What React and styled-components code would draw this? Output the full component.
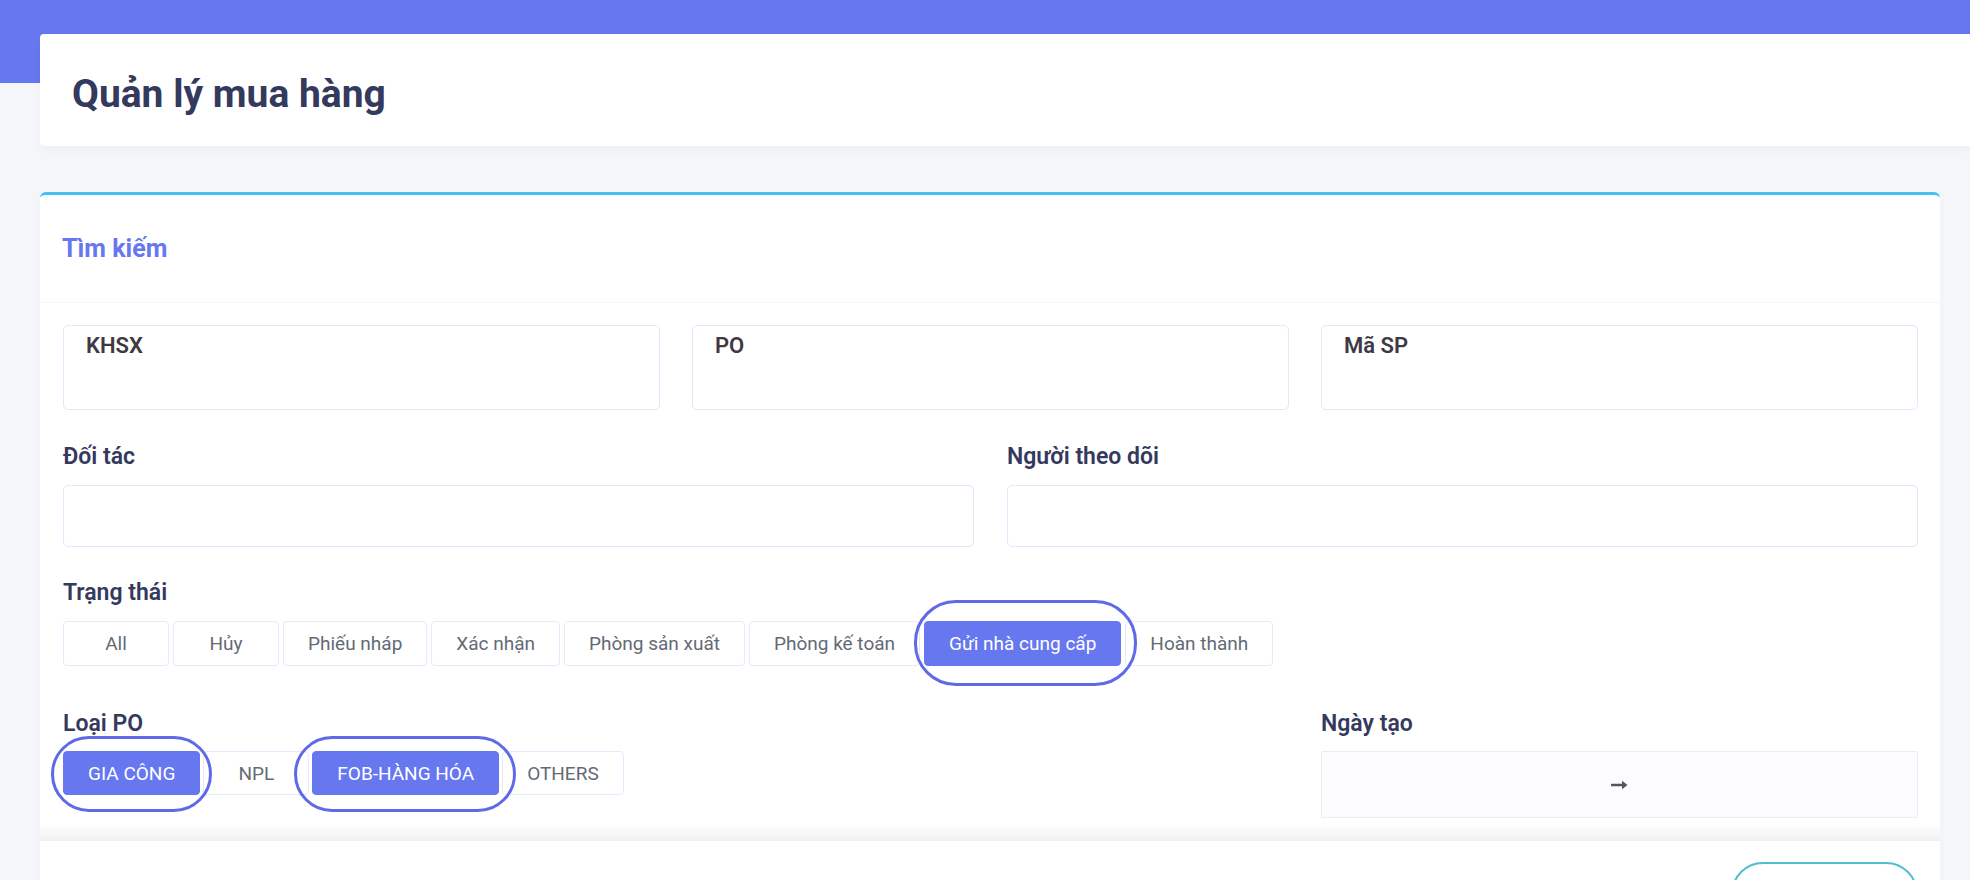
import styled, { createGlobalStyle } from 'styled-components'

const GlobalStyle = createGlobalStyle`
  html, body {
    margin: 0;
    overflow: hidden;
  }
  body {
    font-family: Roboto, "Noto Sans", Arial, sans-serif;
    color: #34395e;
  }
  * { box-sizing: border-box; }
`

const Page = styled.div`
  min-height: 100vh;
  background: linear-gradient(#6777ef 0, #6777ef 83px, #f4f6f9 83px);
  padding: 34px 30px 0 40px;
`

const SectionHeader = styled.div`
  height: 112px;
  margin-right: -30px;
  background: #fff;
  border-radius: 4px 0 0 4px;
  box-shadow: 0 4px 8px rgba(0, 0, 0, 0.03);
  display: flex;
  align-items: center;
  padding: 8px 0 0 32px;
`

const Title = styled.h1`
  margin: 0;
  font-size: 39px;
  font-weight: 700;
  color: #34395e;
`

const Card = styled.div`
  margin-top: 46px;
  background: #fff;
  border-top: 3px solid #45bff4;
  border-radius: 6px;
  box-shadow: 0 4px 8px rgba(0, 0, 0, 0.03);
`

const CardHeader = styled.div`
  height: 108px;
  display: flex;
  align-items: center;
  padding: 0 22px;
  border-bottom: 1px solid #f6f6f9;
`

const CardTitle = styled.h4`
  margin: 0;
  font-size: 25px;
  font-weight: 700;
  color: #6777ef;
`

const CardBody = styled.div`
  padding: 22px 22px 4px 23px;
  display: flex;
  flex-direction: column;
`

const Grid = styled.div`
  display: grid;
  grid-template-columns: repeat(${p => p.$cols}, 1fr);
  column-gap: ${p => p.$gap || 32}px;
  margin-top: ${p => p.$top || 0}px;
`

const Field = styled.div`
  display: flex;
  flex-direction: column;
  grid-column: span ${p => p.$span || 1};
`

const Label = styled.label`
  display: block;
  font-size: 23px;
  line-height: 26px;
  font-weight: 600;
  color: #34395e;
  margin-bottom: ${p => p.$gap || 15}px;
`

const BoxInput = styled.div`
  height: 85px;
  padding: 7px 22px;
  border: 1.5px solid #e4e7fb;
  border-radius: 5px;
  font-size: 22px;
  line-height: 26px;
  font-weight: 600;
  color: #3f3944;
`

const TextInput = styled.input`
  height: 62px;
  width: 100%;
  border: 1.5px solid #e4e7fb;
  border-radius: 5px;
  background: #fff;
  outline: none;
  padding: 0 18px;
  font: inherit;
  font-size: 20px;
`

const Section = styled.div`
  margin-top: ${p => p.$top}px;
`

const ButtonRow = styled.div`
  display: flex;
  gap: ${p => p.$gap || 4}px;
`

const OptionButton = styled.button`
  position: relative;
  height: ${p => p.$h || 45}px;
  min-width: 106px;
  padding: 0 24px;
  border: 1.5px solid ${p => (p.$active ? '#6777ef' : '#e6e8fb')};
  border-radius: 4px;
  background: ${p => (p.$active ? '#6777ef' : '#fff')};
  color: ${p => (p.$active ? '#fff' : '#636a75')};
  font-family: inherit;
  font-size: 19px;
  cursor: pointer;
  white-space: nowrap;

  ${p =>
    p.$ring &&
    `
    &::after {
      content: '';
      position: absolute;
      inset: ${p.$ring};
      border: 3.5px solid #5e6ae8;
      border-radius: 42px;
      pointer-events: none;
      z-index: 2;
    }
  `}
`

const DateRange = styled.div`
  height: 67px;
  display: flex;
  align-items: center;
  background: #fcfcfe;
  border: 1px solid #ececf3;
  border-radius: 2px;
`

const DateInput = styled.input`
  flex: 1;
  min-width: 0;
  height: 100%;
  border: none;
  background: transparent;
  outline: none;
  font: inherit;
  font-size: 20px;
  text-align: center;
`

const ArrowIcon = styled.svg`
  width: 18px;
  height: 12px;
  margin: 0 6px;
  flex: none;
`

const FooterShade = styled.div`
  height: 19px;
  background: linear-gradient(rgba(0, 0, 0, 0), rgba(0, 0, 0, 0.055));
`

const CardFooter = styled.div`
  display: flex;
  justify-content: flex-end;
  padding: 21px 22px 20px;
`

const OutlineButton = styled.button`
  width: 187px;
  height: 64px;
  border: 2px solid #4fbdd2;
  border-radius: 32px;
  background: #fff;
`

const statuses = [
  { label: 'All' },
  { label: 'Hủy' },
  { label: 'Phiếu nháp' },
  { label: 'Xác nhận' },
  { label: 'Phòng sản xuất' },
  { label: 'Phòng kế toán' },
  { label: 'Gửi nhà cung cấp', active: true, ring: '-22px -17px -21px -11px' },
  { label: 'Hoàn thành' },
]

const poTypes = [
  { label: 'GIA CÔNG', active: true, ring: '-16px -13px -18px -13px' },
  { label: 'NPL' },
  { label: 'FOB-HÀNG HÓA', active: true, ring: '-16px -18px -18px -19px' },
  { label: 'OTHERS' },
]

export default function App() {
  return (
    <>
      <GlobalStyle />
      <Page>
        <SectionHeader>
          <Title>Quản lý mua hàng</Title>
        </SectionHeader>

        <Card>
          <CardHeader>
            <CardTitle>Tìm kiếm</CardTitle>
          </CardHeader>

          <CardBody>
            <Grid $cols={3}>
              <BoxInput>KHSX</BoxInput>
              <BoxInput>PO</BoxInput>
              <BoxInput>Mã SP</BoxInput>
            </Grid>

            <Grid $cols={2} $gap={33} $top={34}>
              <Field>
                <Label>Đối tác</Label>
                <TextInput />
              </Field>
              <Field>
                <Label>Người theo dõi</Label>
                <TextInput />
              </Field>
            </Grid>

            <Section $top={33}>
              <Label>Trạng thái</Label>
              <ButtonRow>
                {statuses.map(s => (
                  <OptionButton key={s.label} $active={s.active} $ring={s.ring}>
                    {s.label}
                  </OptionButton>
                ))}
              </ButtonRow>
            </Section>

            <Grid $cols={3} $top={45}>
              <Field $span={2}>
                <Label $gap={14}>Loại PO</Label>
                <ButtonRow $gap={3}>
                  {poTypes.map(t => (
                    <OptionButton key={t.label} $h={44} $active={t.active} $ring={t.ring}>
                      {t.label}
                    </OptionButton>
                  ))}
                </ButtonRow>
              </Field>
              <Field>
                <Label $gap={14}>Ngày tạo</Label>
                <DateRange>
                  <DateInput />
                  <ArrowIcon viewBox="0 0 18 12">
                    <path d="M1 6h12" stroke="#50555e" strokeWidth="2.6" strokeLinecap="round" />
                    <path d="M11 1.8 16.5 6 11 10.2z" fill="#50555e" />
                  </ArrowIcon>
                  <DateInput />
                </DateRange>
              </Field>
            </Grid>
          </CardBody>

          <FooterShade />
          <CardFooter>
            <OutlineButton aria-label="Tìm kiếm" />
          </CardFooter>
        </Card>
      </Page>
    </>
  )
}
